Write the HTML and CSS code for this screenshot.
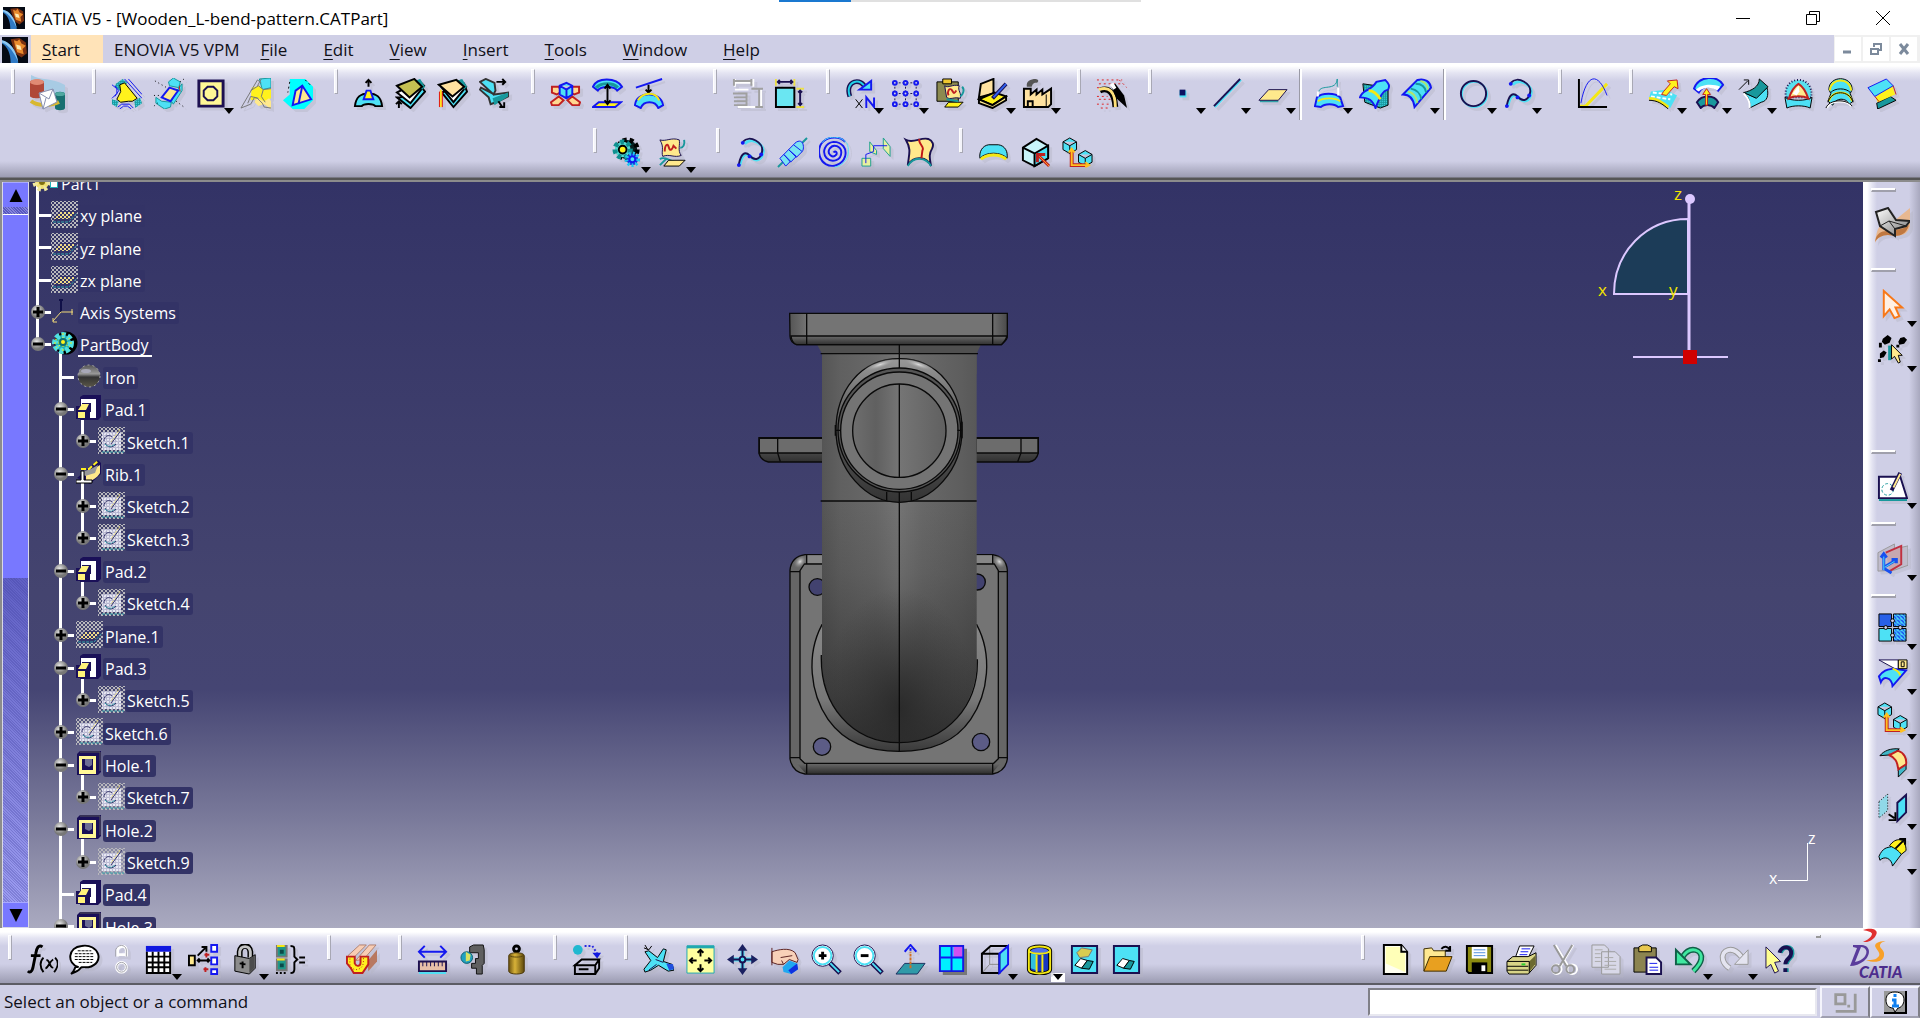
FILE: index.html
```html
<!DOCTYPE html>
<html lang="en">
<head>
<meta charset="utf-8">
<title>CATIA V5 - [Wooden_L-bend-pattern.CATPart]</title>
<link rel="stylesheet" href="styles.css">
</head>
<body>
<svg class="sprite" aria-hidden="true">
<defs>
<linearGradient id="g-shell" x1="0" x2="1" y1="0" y2="1"><stop offset="0" stop-color="#fff"/><stop offset="1" stop-color="#777"/></linearGradient>
<linearGradient id="g-brass"><stop offset="0" stop-color="#6d5410"/><stop offset=".4" stop-color="#d8b238"/><stop offset="1" stop-color="#5c470c"/></linearGradient>
<radialGradient id="g-knob" cx=".4" cy=".35"><stop offset="0" stop-color="#e8e8e8"/><stop offset="1" stop-color="#777"/></radialGradient>
<linearGradient id="g-iron" x2="0" y2="1"><stop offset="0" stop-color="#555"/><stop offset=".4" stop-color="#999"/><stop offset=".55" stop-color="#333"/><stop offset="1" stop-color="#5a5648"/></linearGradient>
<pattern id="p-dots" width="4" height="4" patternUnits="userSpaceOnUse"><path fill="#b8b8bc" d="M1 0h2v1H1zM0 1h1v2H0zM3 1h1v2H3zM1 3h2v1H1z"/></pattern>
<pattern id="p-gold" width="4" height="4" patternUnits="userSpaceOnUse"><path fill="#f0dc88" d="M1 0h2v1H1zM0 1h1v2H0zM3 1h1v2H3zM1 3h2v1H1z"/></pattern>
<pattern id="p-white" width="3" height="3" patternUnits="userSpaceOnUse"><path fill="#f4f4ff" d="M0 0h2v2H0z"/><path fill="#c4c4dc" d="M2 0h1v3H0V2h2z"/></pattern>
<pattern id="p-teal" width="2" height="2" patternUnits="userSpaceOnUse"><path class="ft" d="M0 0h2v2H0z"/><path class="fc" d="M0 0h1v1H0z"/></pattern>
<pattern id="p-bluehatch" width="4" height="4" patternUnits="userSpaceOnUse"><path class="fc" d="M0 0h4v4H0z"/><path fill="#1030f0" d="M0 0h2l2 2v2zM0 3l1 1H0z"/></pattern>

<symbol id="i-app" viewBox="0 0 24 24"><path fill="#050a14" d="M0 0h24v24H0z"/><path fill="#7a3010" d="M8 2l8-1 6 4 1 10-5 4-6-4z"/><path fill="#e98a2c" d="M11 3l3 1 2-2 2 4 4 2-3 3 1 5-6-2-2-6z"/><path fill="#ffe9b0" d="M13 7l4 1 1 4-4-1z"/><path fill="#2f79c4" d="M0 3c8 2 14 11 15 21H8C8 15 5 9 0 6z"/><path fill="#8cc8f2" d="M0 3c7 1 13 9 15 20-4-9-8-15-15-18z"/></symbol>
<symbol id="i-mail" viewBox="0 0 36 36"><path fill="#a8cbe4" d="M2 0c10 6 20 2 34 10v14L14 14 2 6z"/><path fill="#b04838" d="M1 7c0-3 14-3 14 0v14c0 3-14 3-14 0z"/><ellipse fill="#e08a74" cx="8" cy="7" rx="7" ry="3"/><path fill="#187070" d="M26 19c0-3 10-3 10 0v14c0 3-10 3-10 0z"/><ellipse fill="#50a8a0" cx="31" cy="19" rx="5" ry="2"/><path stroke="#d8b830" stroke-width="4" d="M2 26c6 5 20 5 28 1"/><path fill="#fff" stroke="#8890b0" stroke-width="1" d="M10 18l14-4 4 13-14 7z"/><path stroke="#8890b0" stroke-width="1" d="M10 18l10 6 4-10M14 34l3-11"/></symbol>
<symbol id="i-extract" viewBox="0 0 32 32"><path fill="url(#p-teal)" d="M5 6l7-5 5 4-8 8-5-4zM24 24l6-4 2 6-7 5zM1 22l7 2-2 6-5-3z"/><path class="sb" stroke-width="1" d="M1 7l5 4v5l-5 5M4 8l4 5-4 6M14 1l18 20M18 1l14 16M7 30l4-3h8l4 4M9 32l4-3h4l4 3"/><path class="fyy sk" stroke-width="1" d="M9 7l5-2 13 16-5 3h-4l-8 1-4-3 4-8z"/></symbol>
<symbol id="i-lightface" viewBox="0 0 32 32"><path class="fc st" stroke-width="1" d="M16 4l5-4 7 4-1 6-10-2zM3 20l6 4 10 1-1 5-6 2-9-6zM24 14l6-8v7l-9 14-2-3z"/><path class="fy sb" d="M17 10l9 3-8 11-9-4z"/><path class="sr" stroke-width="1" d="M27 8l1 6"/><path class="sk" stroke-width="1" stroke-dasharray="1 3" d="M2 3l14 8M1 18h8M24 24l8 6M28 4l4-3M1 29l6-5"/></symbol>
<symbol id="i-body" viewBox="0 0 32 32"><path fill="#fff796" stroke="#1d1050" stroke-width="3" d="M4 3h25v26H4z"/><path class="sn" d="M13 9h6l4 4v6l-4 4h-6l-4-4v-6z"/></symbol>
<symbol id="i-split" viewBox="0 0 32 32"><path class="fc st" stroke-width="1" d="M20 1l12-1v10l-9 2z"/><path class="fyy" d="M12 10l8-2 4 4 8-1v10l-7 4-8-3-6 1z"/><path class="fy" d="M17 20l8 4 5-3 2 3v8l-7-5-6 2-4-4z"/><path stroke="#777" stroke-width="1" d="M1 31L18 2l4 3M1 31l10-4 4-7 3 1 5 5 2 4 7 1M11 13l8-5 5 4-2 7 4 6M24 12l8-1M18 8l4-7M8 26l3-7 8 2"/></symbol>
<symbol id="i-tri" viewBox="0 0 32 32"><path fill="#0ff" d="M8 1h16l8 8v14l-9 9H11l-10-9 7-6z"/><path class="fy sb" d="M21 8l9 14-19 6 3-15z"/><path class="sb" d="M21 8l-4 19"/><path class="sk" stroke-width="1" stroke-dasharray="2 3" d="M8 4L6 15M24 2l7 7"/></symbol>
<symbol id="i-extrude" viewBox="0 0 32 32"><path class="sk" d="M16 9V2M13 5l3-3 3 3"/><path class="fc sk" d="M2 29c1-9 5-13 14-13s13 4 14 13h-7c-2-3-12-3-14 0z"/><path class="fyy sb" d="M14 13h4l3 9H11z"/></symbol>
<symbol id="i-thick" viewBox="0 0 32 32"><path class="fc sk" d="M2 20l14 11 15-17-4-5L6 20z"/><path class="fw sk" d="M2 15l14 11L30 8 25 3z"/><path class="ft" d="M20 3l6-2 5 8-3 3z"/><path fill="#c5c052" stroke="#000" d="M2 8L20 1l8 8-13 11z"/><path class="sk" d="M4 31v-7M1 27l3-3 3 3"/></symbol>
<symbol id="i-close" viewBox="0 0 32 32"><path class="fc sk" d="M5 15l12 15 14-16-3-8z"/><path class="fw sk" d="M5 10l12 15L30 9 24 3z"/><path class="ft" d="M20 3l6-2 5 8-3 3z"/><path fill="#ffe2a0" stroke="#000" d="M2 7L20 2l8 7-12 10z"/><path stroke="#e01010" stroke-width="4" d="M4 30V14"/><path stroke="#ffe020" stroke-width="2" d="M4 30V12"/></symbol>
<symbol id="i-sew" viewBox="0 0 32 32"><path class="fc" stroke="#333" d="M1 4l6-3 9 4 1 8-2 4zM2 10l14 7 14-2v4l-10 5-8 3-2-7L1 12z"/><path class="ft" d="M14 21l16-6v4l-14 9z"/><path class="sk" d="M18 4h9M24 1l3 3-3 3M20 24l4 6M26 25v5h-5"/></symbol>
<symbol id="i-crosscube" viewBox="0 0 32 32"><path stroke="#c02020" fill="#ffd890" d="M2 9h7l3 5-5 3-5-2zM30 9h-7l-3 5 5 3 5-2zM1 25l8-6 5 4-5 5H2zM31 25l-8-6-5 4 5 5h7z"/><path class="fc sb" d="M10 8l7-3 6 3v9l-6 4-7-4zM10 8l7 4 6-4M17 12v9"/></symbol>
<symbol id="i-project" viewBox="0 0 32 32"><path class="fc sb" d="M1 9c4-10 24-10 30 0l-5 4c-3-5-17-5-20 0z"/><path class="ft" d="M3 9c6-6 20-6 25 0l-3 2c-4-5-16-5-19 0z"/><path class="fyy sb" d="M7 25h23l-6 5H1z"/><path class="sk" d="M16 8v17M13 11l3-4 3 4M13 23l3 4 3-4"/></symbol>
<symbol id="i-tangent" viewBox="0 0 32 32"><path class="sb" d="M2 10L29 1"/><path class="sk" d="M15 7v7M12 12l3 3 3-3"/><path class="fc sb" d="M1 28c1-15 27-15 29 0l-5 3c-3-8-15-8-18 0z"/><path class="syy" d="M4 23c6-9 18-9 22 0"/></symbol>
<symbol id="i-gridoff" viewBox="0 0 32 32"><path stroke="#fff" d="M3 5h18M3 1v8M22 1v8M30 12v18H6M3 12h14"/><path stroke="#a0a0a0" d="M2 3h18M2 1v7M20 1v7M20 11h12M28 12v18M24 30h8M1 16h14v13M2 20h12M2 24h12M2 28h12"/></symbol>
<symbol id="i-constraint" viewBox="0 0 32 32"><path fill="#6ae6f2" stroke="#000" d="M2 10h19v20H2z"/><path stroke="#ece04a" d="M2 8V1M21 8V1M23 11h8M23 30h8"/><path class="sn" d="M4 4h15M27 13v15M6 2L4 4l2 2M17 2l2 2-2 2M25 15l2-2 2 2M25 26l2 2 2-2"/></symbol>
<symbol id="i-repeat" viewBox="0 0 32 32"><path stroke="#1a1050" stroke-width="5" d="M5 19C-1 2 18-1 21 11"/><path stroke="#20d0e8" stroke-width="2" d="M5 19C-1 2 18-1 21 11"/><path class="fc sb" d="M15 12h12V3z"/><path class="sk" stroke-width="1" d="M11 22l7 9M18 22l-7 9"/><path class="sb" d="M22 31V20l8 10V20"/></symbol>
<symbol id="i-pattern" viewBox="0 0 32 32"><path class="sn" stroke-width="1" stroke-dasharray="2 2" d="M5 5h22M5 16h22M5 27h22M5 5v22M16 5v22M27 5v22"/><g class="sb" fill="#cfcfe6"><circle cx="5" cy="5" r="2"/><circle cx="16" cy="5" r="2"/><circle cx="27" cy="5" r="2"/><circle cx="5" cy="16" r="2"/><circle cx="16" cy="16" r="2"/><circle cx="27" cy="16" r="2"/><circle cx="5" cy="27" r="2"/><circle cx="16" cy="27" r="2"/><circle cx="27" cy="27" r="2"/></g></symbol>
<symbol id="i-pastecopy" viewBox="0 0 32 32"><path fill="#8c8a50" stroke="#000" stroke-width="1" d="M2 4h22v20H2z"/><path fill="#f0c830" stroke="#000" stroke-width="1" d="M8 1h9v5H8z"/><path class="fy sn" stroke-width="1" d="M10 8c4 3 8-2 15 0-2 5 3 8 1 13-6-2-10 2-14-1z"/><path class="sr" d="M14 18c-2-4 1-8 3-6s2 6 5 1"/><path class="fyy sk" stroke-width="1" d="M14 25h15l-5 5H10z"/><path class="st" d="M28 9c3 3 1 8-2 10M12 22l12 2"/></symbol>
<symbol id="i-catalog" viewBox="0 0 32 32"><path fill="#ffe2a0" stroke="#000" d="M4 6l13-5v15L2 20z"/><path class="fyy sk" d="M2 22l16-7 12 4-14 9z"/><path class="fy sk" d="M2 22v4l14 5 14-8v-4l-14 9z"/><path stroke="#1a1050" stroke-width="4" d="M30 6L16 21"/><path stroke="#3060f0" stroke-width="2" d="M30 6L17 20"/></symbol>
<symbol id="i-factory" viewBox="0 0 32 32"><path fill="#ffe2a0" stroke="#000" d="M2 30V11h7v6l6-5v5l6-5v5l9-6v16l-3 3zM6 30v-6h5v6"/><path class="sk" stroke-width="1" d="M25 17v13"/><path fill="#555" d="M5 9c-1-6 4-8 9-8 3 0 4 3 1 4-4 0-4 2-5 4z"/></symbol>
<symbol id="i-analysis" viewBox="0 0 32 32"><path stroke="#e02020" stroke-width="1" stroke-dasharray="2 3" d="M1 2h26M3 6h22M1 19h11M3 22h12M1 27h12M5 31h8M24 2l8 8M1 10h4"/><path stroke="#000" stroke-width="6" d="M4 13c9-4 15 2 16 17"/><path stroke="#ffe27a" stroke-width="3" d="M3 12c10-4 17 2 17 18"/><path fill="#000" d="M15 7l5-1 9 12 3 13-11-10z"/><path fill="#fff" d="M14 7l4-2 3 5-3 2z"/></symbol>
<symbol id="i-point" viewBox="0 0 32 32"><path class="fc" d="M13 13h7v7h-7z"/><path fill="#0c1060" d="M13 12h6v6h-6z"/></symbol>
<symbol id="i-line" viewBox="0 0 32 32"><path class="sc" stroke-width="2" d="M3 30L30 2"/><path class="sn" d="M2 29L29 1"/></symbol>
<symbol id="i-plane" viewBox="0 0 32 32"><path stroke="#30a0a8" stroke-width="2" d="M3 24h19"/><path class="fy sn" stroke-width="1" d="M12 12h19l-9 11H2z"/></symbol>
<symbol id="i-projcurve" viewBox="0 0 32 32"><path class="st" stroke-width="1" d="M5 14c2-8 18 0 19-13v8"/><path class="fc sb" d="M3 20c5-5 19-5 24 0l3 9-5 1c-4-4-14-4-18 0l-6-1z"/><path class="syy" stroke-width="2" d="M4 24c5-4 18-4 23 0"/><path stroke="#fff" d="M4 14v5M25 10v8"/></symbol>
<symbol id="i-intersect" viewBox="0 0 32 32"><path fill="url(#p-teal)" stroke="#000" stroke-width="1" d="M4 6l14 2 12 4v16l-8 3-16-6z"/><path class="fc sb" d="M1 20c3-9 10-5 17-16l9-2c4 4 5 6 3 10-6 1-9 9-13 19-3-8-7-11-16-11z"/><path class="syy" stroke-width="3" d="M10 13c5 0 9 4 12 9"/></symbol>
<symbol id="i-offsetcurve" viewBox="0 0 32 32"><path class="fc sb" d="M2 17L17 2c8-2 13 2 14 8L14 30C13 22 9 17 2 17z"/><path class="syy" stroke-width="2" d="M20 3c5 1 7 4 8 9M7 14c6 1 9 6 10 12" opacity=".6"/><path class="st" d="M10 11c6 1 10 5 11 11M15 6c6 0 10 3 11 9"/></symbol>
<symbol id="i-circle" viewBox="0 0 32 32"><circle class="sc" stroke-width="2" cx="17" cy="17" r="13"/><circle class="sn" stroke-width="2" cx="16" cy="16" r="13"/></symbol>
<symbol id="i-spline" viewBox="0 0 32 32"><path class="sc" stroke-width="3" d="M10 7c7-8 21 1 19 9-2 10-9 9-13 4-5-5-9-1-11 9"/><path class="sn" stroke-width="2" d="M8 5C15-3 30 6 28 15c-2 10-9 9-13 4-5-5-9-1-11 9"/><g fill="#1418f0"><circle cx="8" cy="6" r="2"/><circle cx="15" cy="20" r="2"/><circle cx="4" cy="29" r="2"/><circle cx="27" cy="18" r="2"/></g></symbol>
<symbol id="i-law" viewBox="0 0 32 32"><path class="syy" stroke-width="3" d="M3 29h6L31 6"/><path class="sb" stroke-width="1" d="M4 26C10-6 22-6 31 18"/><path class="sk" stroke-width="2" d="M2 1v29h29"/></symbol>
<symbol id="i-extract2" viewBox="0 0 32 32"><path class="fc" d="M3 14l15-2 12 6-7 13-10-6-12-4z"/><path stroke="#fff" stroke-dasharray="4 2" d="M5 15l20 2M3 19l20 3"/><path class="syy" stroke-width="3" d="M1 21c8 0 13 4 20 9"/><path class="sk" stroke-width="1" d="M1 23c9 0 14 4 20 9"/><path class="fyy sr" stroke-width="1" d="M14 17l2-3 7-8-3-3 10-1 1 9-4-2-8 9z"/></symbol>
<symbol id="i-offset" viewBox="0 0 32 32"><path class="ft sn" d="M4 25c5-8 18-8 22 0l-4 6c-3-4-11-4-14 0z"/><path class="fc sb" d="M1 11C6-3 26-3 31 7l-5 6c-4-6-16-6-20 2z"/><path fill="#fff" d="M3 12c6-6 18-6 25-3l-3 4c-6-4-14-4-19 1z"/><path class="fyy sr" stroke-width="1" d="M10 17l4-6 4 6h-3v11h-2V17z"/></symbol>
<symbol id="i-sweep" viewBox="0 0 32 32"><path class="fc sk" stroke-width="1" d="M6 15l12 5 12-10c2 8 0 14-6 15l-12 6c1-7-1-11-6-16z"/><path class="ft sk" stroke-width="1" d="M22 1l9 8-12 12L6 15C14 13 22 9 22 1z"/><path stroke="#fff" stroke-width="2" d="M6 16c5 5 7 9 6 15"/><path class="sk" stroke-width="1" d="M1 12L10 3M6 2h5v5"/></symbol>
<symbol id="i-fill" viewBox="0 0 32 32"><path fill="#5ae0ee" stroke="#1a1050" stroke-dasharray="1 2" d="M3 20C-1-4 33-4 29 20z"/><path class="fc sk" stroke-width="1" d="M2 20l2 11c6-3 18-3 24 0l2-11c-6 4-22 4-28 0z"/><path class="fy sr" d="M16 6c5 3 8 9 10 15-5-3-15-3-20 0 2-6 5-12 10-15z"/><path fill="#fff" d="M10 16l6-8 1 6-3 4z"/></symbol>
<symbol id="i-loft" viewBox="0 0 32 32"><path class="fc sk" stroke-width="1" d="M4 12C4-3 28-3 28 12l-2 4 3 8-4 3c-3-7-14-7-17 1l-5-4 3-8z"/><path class="syy" stroke-width="2" d="M5 13C6-1 26-1 27 13M4 24c4-12 20-12 24 0"/><path class="sk" stroke-width="1" d="M6 15c4-5 16-5 20 0M3 25c4-13 22-13 26 0"/><path stroke="#fff" d="M2 31c3-8 20-9 25-2"/><path class="sk" stroke-width="1" d="M1 31c3-9 21-10 27-2"/></symbol>
<symbol id="i-blend" viewBox="0 0 32 32"><path class="ft sk" stroke-width="1" d="M10 26l14-7 6 4-19 9z"/><path class="fyy" d="M9 20l6-6 11-6 3 9-18 8z"/><path class="fc sb" stroke-width="1" d="M1 10L20 1l7 7L8 19z"/><path class="sr" stroke-width="1" d="M8 19l5 6M27 8l3 9"/></symbol>

<symbol id="i-gears" viewBox="0 0 32 32"><circle cx="16" cy="13" r="10" fill="#062020" stroke="#000" stroke-width="5" stroke-dasharray="4 3"/><circle cx="11" cy="13" r="8" fill="#50d8d0" stroke="#109090" stroke-width="5" stroke-dasharray="4 3"/><circle cx="11" cy="13" r="4" class="fyy sk"/><circle cx="21" cy="23" r="6" fill="#1830e0" stroke="#20c8f0" stroke-width="4" stroke-dasharray="2 2"/><circle cx="21" cy="23" r="3" class="fc sb"/></symbol>
<symbol id="i-userfeat" viewBox="0 0 32 32"><path class="fy sn" stroke-width="1" d="M3 3c6 2 12-3 20 0 1 5-2 11 2 16-7 3-12-2-19 1-2-5 2-9-3-17z"/><path class="sr" d="M8 15c0-7 3-9 4-5s3 5 5-1l3 3"/><path class="st" stroke-width="2" d="M28 3c1 5-1 8-4 8M3 23c4-4 10 2 15 2M3 29l7-7"/><path class="fy sk" stroke-width="1" d="M12 24h17l-6 6H7z"/></symbol>
<symbol id="i-helix" viewBox="0 0 32 32"><path class="st" d="M1 31L31 1"/><path class="sb" stroke-width="1" fill="#7ae4f2" d="M3 22l4-4 7 7-5 5zM7 18l5-5 8 7-6 6zM12 13l5-5 9 7-6 6zM17 8c4-5 9-5 10 0s-1 7-1 7"/></symbol>
<symbol id="i-spiral" viewBox="0 0 32 32"><path class="sb" stroke-width="2" d="M15 16c2-3 5 1 2 3-4 3-9-2-6-7 4-6 12-2 12 4 0 8-9 11-15 6C2 15 7 6 15 5c9 0 14 7 12 15-3 9-13 12-20 8-8-5-9-17-3-23C10-1 22-1 27 5"/><path class="sc" stroke-width="1" d="M3 6C10-3 24-1 29 7c4 10-1 22-13 24"/></symbol>
<symbol id="i-curvenet" viewBox="0 0 32 32"><path fill="#e8f0a0" stroke="#20a090" stroke-width="1" d="M1 22h9v8H1zM9 15V5l7 9v4zM23 12V1l7 9v10z"/><path class="sb" stroke-width="1" d="M5 27v-9l8-3V9h14"/></symbol>
<symbol id="i-isoparam" viewBox="0 0 32 32"><path class="fy sn" stroke-width="2" d="M3 3c8 4 15-3 23-1 5 2 6 6 4 10-3 5-3 8-1 18-4-9-17-12-24-1 1-11 4-16-2-26z"/><path class="st" d="M5 30c6-11 19-9 24 0"/><path stroke="#c01818" stroke-width="2" d="M17 2c-2 5 6 8 3 12l-1 8"/></symbol>
<symbol id="i-boundary" viewBox="0 0 32 32"><path class="fc sk" stroke-width="1" d="M2 22c-1-6 2-13 9-14h10c7 1 10 7 9 14-6-7-22-7-28 0z"/><path class="syy" stroke-width="3" d="M3 23c6-6 20-6 26 0"/></symbol>
<symbol id="i-cubearrow" viewBox="0 0 32 32"><path fill="#c8f4fa" stroke="#000" d="M3 11L17 2l12 7v13L15 30 3 24z"/><path class="fc sk" d="M15 17l14-8v13L15 30zM3 11l12 6"/><path stroke="#c02020" stroke-width="3" d="M19 19l11 11M18 26v-8h8"/><path stroke="#ffa020" stroke-width="1" d="M20 20l10 10"/></symbol>
<symbol id="i-axiscubes" viewBox="0 0 32 32"><path class="fc sk" stroke-width="1" d="M1 5l7-4 7 4v8l-7 4-7-4zM1 5l7 4 7-4M8 9v8M17 18l7-4 7 4v8l-7 4-7-4zM17 18l7 4 7-4M24 22v8"/><path stroke="#c02020" stroke-width="4" d="M10 15v14h16"/><path stroke="#ffc020" stroke-width="2" d="M10 13v16h17M7 16l3-4 3 4M24 26l4 3-4 2"/></symbol>

<symbol id="i-fx" viewBox="0 0 32 32"><path class="sk" stroke-width="3" d="M16 3C12 0 10 4 9 10L6 25c-1 4-3 5-5 3M4 12h10"/><path class="sk" d="M17 14c-4 4-4 10 0 15M29 14c4 4 3 10-1 15M20 17c3-2 4 9 7 7M27 16c-4 2-5 9-8 9"/></symbol>
<symbol id="i-bubble" viewBox="0 0 32 32"><path class="fw sk" stroke-width="2" d="M10 24C-3 20-1 3 13 2c18-3 25 18 7 22-5 0-8-1-9 2-1 2-6 3-9 5 3-2 3-4 5-8z"/><path class="sk" stroke-width="1" stroke-dasharray="3 1" d="M9 7h14M6 10h20M6 13h20M6 16h20M10 19h14"/></symbol>
<symbol id="i-chain" viewBox="0 0 32 32"><g stroke="#fff" stroke-width="3"><path d="M12 13V6c2-5 8-5 9 0v7M12 11h9"/><circle cx="16" cy="24" r="5"/></g><g stroke="#a0a0a8" stroke-width="1"><path d="M10 13V6c2-6 10-6 11 0v7"/><circle cx="16" cy="24" r="5"/></g></symbol>
<symbol id="i-table" viewBox="0 0 32 32"><path class="fw" d="M4 3h25v27H4z"/><path fill="#1018e0" d="M3 2h26v6H3z"/><path class="sk" stroke-width="2" d="M4 8v22h24V8M4 13h24M4 19h24M4 24h24M10 8v22M16 8v22M22 8v22"/></symbol>
<symbol id="i-tree" viewBox="0 0 32 32"><path class="fy sk" d="M1 12h6v10H1z"/><path class="fw sb" stroke-width="2" d="M24 1h6v7h-6zM24 14h6v7h-6zM24 26h6v5h-6z"/><path class="sk" d="M10 17h12M12 15l-2 2 2 2M20 15l2 2-2 2M10 12l9-9M14 3h5v5"/><path class="sr" stroke-width="2" d="M17 11h5M19 9v5M16 26h5M18 24v5"/></symbol>
<symbol id="i-lock" viewBox="0 0 32 32"><path stroke="#000" stroke-width="6" d="M10 14V8c1-8 10-8 11 0v6"/><path stroke="#c4c4c4" stroke-width="3" d="M10 14V8c1-7 10-7 11 0v6"/><path fill="#8c8c8c" stroke="#000" stroke-width="1" d="M5 12l15 3 6-4v14l-6 6-15-3z"/><path fill="#4c4c4c" d="M20 15l5-3v13l-5 5z"/><path class="sk" stroke-width="2" d="M13 18v7M10 20l6 1"/></symbol>
<symbol id="i-equiv" viewBox="0 0 32 32"><path fill="#209888" stroke="#777" d="M2 2h10v11H2zM2 16h10v11H2z"/><path class="syy" stroke-width="2" d="M2 2h8M2 16h8"/><path fill="#0a4a48" d="M5 6h4v4H5zM5 20h4v4H5z"/><path class="sk" d="M1 30h2M5 30h2M9 30h2M16 2c4 0 4 1 4 6v5l3 3-3 3v7c0 3-1 4-4 4M25 14h6M25 19h6"/></symbol>
<symbol id="i-material" viewBox="0 0 32 32"><path fill="#b87860" d="M22 18L32 6v12l-9 10z"/><path fill="#f8cdb4" stroke="#b08070" stroke-width="1" d="M2 12L14 1h7L9 13v5zM10 17L24 1h7L18 16z"/><path fill="#fff020" stroke="#c02020" d="M1 13h8v7c2 4 6 3 6-1v-6h8v8l-6 9H8l-3-5-4-5z"/><path stroke="#c02020" stroke-width="1" stroke-dasharray="1 2" d="M4 15v6c2 8 13 7 14-2v-5"/></symbol>
<symbol id="i-measure" viewBox="0 0 32 32"><path class="sb" d="M3 8h26M8 2L2 8l6 6M24 2l6 6-6 6"/><path fill="#e8c0a8" stroke="#1d1050" d="M2 18h28v10H2z"/><path class="sn" stroke-width="1" d="M6 18v5M10 18v5M14 18v5M18 18v5M22 18v5M26 18v5"/><path class="sc" d="M2 30h28"/></symbol>
<symbol id="i-caliper" viewBox="0 0 32 32"><path fill="#606060" stroke="#111" stroke-width="1" d="M11 3l4-2h10l1 5v14l-2 2v9h-6v-6h-5v-5h4v-5h3V9h-9z"/><circle cx="8" cy="14" r="6" fill="#20a0c0" stroke="#106070" stroke-width="1"/><path fill="#d8e060" d="M7 8l5 3-1 6-4 1z"/></symbol>
<symbol id="i-inertia" viewBox="0 0 32 32"><circle class="sk" stroke-width="3" cx="16" cy="5" r="3"/><path fill="url(#g-brass)" stroke="#4a380a" stroke-width="1" d="M8 12c0-4 16-4 16 0v16c0 4-16 4-16 0z"/><path stroke="#5a4610" stroke-width="1" d="M9 12c2 2 12 2 14 0"/></symbol>
<symbol id="i-knowledge" viewBox="0 0 32 32"><circle cx="6" cy="6" r="5" fill="#20b8d0"/><path stroke="#2828e0" stroke-width="2" stroke-dasharray="2 2" d="M13 2h8l5 8"/><path fill="#1018e0" d="M21 9h9l-4 6z"/><path class="sk" stroke-width="2" d="M3 22l7-6h18l-4 6zM3 22h21v9H3zM28 16v9l-4 6M7 26h10"/></symbol>
<symbol id="i-fly" viewBox="0 0 32 32"><path class="fc sk" stroke-width="1" d="M2 8l4-1 9 7 6-9 3 1-3 12 9 3 2 6-6 1-10-6-8 5-6 2-1-3 7-9z"/><path class="sk" stroke-width="1" d="M2 1l3 5M9 2L6 6M1 4l5 2"/><path fill="#2050e0" d="M24 20l7 1 1 5-5 1z"/><path stroke="#1a1050" stroke-width="1" d="M13 16l8 3M6 27l8-6"/></symbol>
<symbol id="i-fit" viewBox="0 0 32 32"><path fill="#ffffa0" stroke="#20a8b0" stroke-width="1" d="M2 2h28v28H2z"/><path stroke="#20a8b0" stroke-width="3" d="M2 3h28"/><path class="sk" d="M16 7v6M16 21v6M6 17h6M20 17h6M13 9l3-3 3 3M13 25l3 3 3-3M8 14l-3 3 3 3M24 14l3 3-3 3"/></symbol>
<symbol id="i-pan" viewBox="0 0 32 32"><path class="sc" stroke-width="4" d="M16 4v24M4 16h24"/><path class="sn" stroke-width="2" d="M16 3v26M3 16h26"/><path fill="#1a2060" d="M16 0l5 7H11zM16 32l5-7H11zM0 16l7-5v10zM32 16l-7-5v10z"/><circle cx="16" cy="16" r="3" class="fc sn"/></symbol>
<symbol id="i-rotate" viewBox="0 0 32 32"><path fill="#f8d0b8" stroke="#5a2020" stroke-width="1" d="M3 8c6-2 18-5 24 1l3 7-1 3-8-3-6 5H9l-6-2z"/><path stroke="#5a2020" stroke-width="1" d="M3 4v18M12 14l12-2M15 21l-2-4"/><path fill="#20a8f0" d="M14 24l7-7 8 3 1 6-7 5-8-2z"/><path fill="#1030e0" d="M20 27l9-7 1 6-7 5z"/></symbol>
<symbol id="i-zoomin" viewBox="0 0 32 32"><path class="sn" stroke-width="5" d="M18 18l12 12"/><path class="sc" stroke-width="2" d="M18 18l11 11"/><circle class="fw sn" stroke-width="1" cx="12" cy="12" r="11"/><circle class="sc" cx="12" cy="12" r="9"/><path class="sk" stroke-width="3" d="M12 8v8M8 12h8"/></symbol>
<symbol id="i-zoomout" viewBox="0 0 32 32"><path class="sn" stroke-width="5" d="M18 18l12 12"/><path class="sc" stroke-width="2" d="M18 18l11 11"/><circle class="fw sn" stroke-width="1" cx="12" cy="12" r="11"/><circle class="sc" cx="12" cy="12" r="9"/><path class="sk" stroke-width="3" d="M8 12h8"/></symbol>
<symbol id="i-normal" viewBox="0 0 32 32"><path fill="#309aa8" stroke="#1a3060" stroke-width="1" d="M10 20h21l-8 11H1z"/><path stroke="#d07020" stroke-dasharray="3 1" d="M16 25V8"/><path class="sb" d="M10 8l6-7 6 7M16 4v3"/></symbol>
<symbol id="i-multiview" viewBox="0 0 32 32"><path fill="#777" d="M6 5h25v27H6z"/><path fill="#00f0ff" stroke="#1818e0" d="M3 2h24v26H3z"/><path fill="#d050f0" d="M17 3h9v11h-9z"/><path class="sb" d="M15 2v26M3 14h24"/></symbol>
<symbol id="i-isoview" viewBox="0 0 32 32"><path class="fc" d="M21 10l9-8v19l-9 9z"/><path stroke="#888" stroke-width="1" d="M3 30l8-9h10M11 2v19"/><path class="sk" d="M3 10h18v20H3zM3 10l9-8h18"/><path class="sb" d="M21 10l9-8v19l-9 9z"/></symbol>
<symbol id="i-shading" viewBox="0 0 32 32"><path fill="#1838c0" stroke="#000" stroke-width="4" d="M5 7c0-6 22-6 22 0v19c0 6-22 6-22 0z"/><path fill="#30c0e0" d="M7 10h6v17l-6-2z"/><path fill="#5070e8" d="M7 7c2-4 16-4 18 0-2 3-16 3-18 0z"/><path class="syy" d="M5 7c0-6 22-6 22 0v19c0 6-22 6-22 0zM5 7c3 4 19 4 22 0M13 11v18M19 11v18"/></symbol>
<symbol id="i-hideshow" viewBox="0 0 32 32"><path class="fc sn" d="M3 2h26v28H3z"/><path fill="#d8cc50" stroke="#777" stroke-width="1" d="M8 9l5-5 11 2-4 7-9 1z"/><path class="fw sk" stroke-width="1" d="M6 22l6-7 7 2-6 8z"/><path class="ft sk" stroke-width="1" d="M19 17l6 1-4 8-8-1z"/></symbol>
<symbol id="i-swap" viewBox="0 0 32 32"><path class="fc sn" d="M3 2h26v28H3z"/><path class="fw sk" stroke-width="1" d="M6 22l6-7 7 2-6 8z"/><path class="ft sk" stroke-width="1" d="M19 17l5 1-4 8-7-1z"/></symbol>
<symbol id="i-new" viewBox="0 0 32 32"><path fill="#fffff0" stroke="#000" d="M4 1h18l6 7v23H4z"/><path fill="#ffff80" opacity=".5" d="M6 3h14l6 7v19L6 20z"/><path class="fw sk" d="M22 1v7h6"/></symbol>
<symbol id="i-open" viewBox="0 0 32 32"><path fill="#ffe890" stroke="#3a2a00" stroke-width="1" d="M2 28V5l8-1 2 3h12v7"/><path fill="#e8a020" stroke="#3a2a00" stroke-width="1" d="M8 13h23l-6 15H2z"/><path class="sk" d="M20 5c3-3 6-3 9 1M29 2v5h-5"/></symbol>
<symbol id="i-save" viewBox="0 0 32 32"><path fill="#8c8a10" stroke="#000" d="M3 2h26v28H5l-2-2z"/><path class="fw" d="M8 3h16v12H8z"/><path stroke="#5090e0" stroke-width="1" d="M10 6h12M10 9h12M10 12h12"/><path fill="#000" d="M8 19h16v11H8z"/><path class="fw" d="M18 22h4v6h-4z"/></symbol>
<symbol id="i-print" viewBox="0 0 32 32"><path class="fw sk" stroke-width="1" d="M10 13l4-11h15l-6 12z"/><path class="sb" stroke-width="1" d="M16 5h9M15 8h8M14 11h8"/><path fill="#d8d488" stroke="#000" stroke-width="1" d="M1 18l6-5h16l8-4v13l-8 9H3l-2-3z"/><path fill="#6c6a30" d="M24 18l6-6v9l-6 8z"/><path class="sk" stroke-width="1" d="M1 18h23v12M1 23h22M1 27h22"/><path stroke="#30d030" d="M16 21h4"/></symbol>
<symbol id="i-cut" viewBox="0 0 32 32"><g stroke="#fff"><path d="M8 1l13 22M26 1L13 23"/><circle cx="9" cy="26" r="5"/><circle cx="25" cy="26" r="5"/></g><g stroke="#999"><path d="M6 1l13 22M25 1L12 23"/><circle cx="8" cy="26" r="4"/><circle cx="23" cy="26" r="4"/></g></symbol>
<symbol id="i-copy" viewBox="0 0 32 32"><path fill="#d8d8e8" stroke="#999" stroke-width="1" d="M2 1h13l4 4v19H2zM12 8h14l5 5v18H12z"/><path stroke="#aaa" stroke-width="1" d="M5 6h8M5 10h6M5 14h6M5 18h6M15 14h9M15 18h12M15 22h12M15 26h12"/></symbol>
<symbol id="i-paste" viewBox="0 0 32 32"><path fill="#8c8450" stroke="#000" stroke-width="1" d="M2 4h23v25H2z"/><path fill="#e8c850" stroke="#000" stroke-width="1" d="M7 3l4-2h5l4 2v5H7z"/><path class="fw sn" d="M15 14h10l5 5v12H15z"/><path class="sb" stroke-width="1" d="M18 20h8M18 24h9M18 27h9"/></symbol>
<symbol id="i-undo" viewBox="0 0 32 32"><path stroke="#106048" stroke-width="6" d="M9 13c8-12 21-7 19 3-1 5-4 8-8 12"/><path stroke="#40e8a0" stroke-width="3" d="M9 13c8-12 21-7 19 3-1 5-4 8-8 12"/><path fill="#40e8a0" stroke="#106048" d="M2 6v15h15z"/></symbol>
<symbol id="i-redo" viewBox="0 0 32 32"><path stroke="#999" stroke-width="6" d="M23 13C14 1 2 6 4 16c1 5 4 7 7 9"/><path stroke="#e4e4f0" stroke-width="4" d="M23 13C14 1 2 6 4 16c1 5 4 7 7 9"/><path fill="#e4e4f0" stroke="#999" stroke-width="1" d="M30 6v15H16z"/></symbol>
<symbol id="i-whatsthis" viewBox="0 0 32 32"><path class="st" stroke-width="5" d="M17 9c2-8 13-7 12 1 0 5-6 5-6 11M23 25v4"/><path class="sn" stroke-width="4" d="M16 9c2-8 13-7 12 1 0 5-6 5-6 11M22 25v4"/><path fill="#ffff90" stroke="#1d1050" stroke-width="1" d="M2 3v22l5-4 4 9 4-2-4-9 6-1z"/></symbol>

<symbol id="i-shape" viewBox="0 0 36 36"><path fill="#e8b890" d="M36 1v18c-4 14-16 8-22 9-6 0-11 3-13 8 2-14 3-20 14-18z"/><path fill="#c07840" d="M1 35c3-18 18-6 34-17-4 14-16 11-21 10-6 0-11 3-13 7z"/><path fill="url(#g-shell)" stroke="#222" d="M2 5l12-4 8 12 14 1-4 5-11 3v7L6 19z"/><path stroke="#222" stroke-width="1" d="M6 19l9-5 17 5M15 14l6 8"/></symbol>
<symbol id="i-select" viewBox="0 0 32 32"><path fill="#fff0e4" stroke="#f87818" stroke-width="2" d="M7 2v26l6-7 5 9 5-2-4-9h7z"/></symbol>
<symbol id="i-selecttrap" viewBox="0 0 32 32"><path fill="#000" d="M6 5l5-4 4 3-2 5-5 2-3-3zM24 4l4-1 3 3-3 4-5 1-1-3zM3 20l4-3 3 2-3 5-4 1zM1 26h3v3H1zM2 9h3v5H2zM20 11h3v3h-3z"/><path class="st" stroke-width="3" d="M13 12v15"/><path class="fy sk" stroke-width="1" d="M15 11v15l3-3 4 7 2-1-2-7h4z"/></symbol>
<symbol id="i-sketch" viewBox="0 0 32 32"><path class="fw sn" d="M2 6h22l7 22H2z"/><path class="st" d="M2 30h29"/><circle class="st" stroke-width="1" stroke-dasharray="3 2" cx="11" cy="19" r="6"/><path class="sn" stroke-width="4" d="M24 2l-9 18"/><path class="sy" stroke-width="2" d="M24 3l-7 14"/></symbol>
<symbol id="i-axisplanes" viewBox="0 0 32 32"><path fill="#c0bccc" stroke="#999" stroke-width="1" d="M1 10L18 1v5l14-3v20l-14 5-17 1z"/><path fill="#c8a8b0" stroke="#c03040" d="M9 10l16-7v19l-12 7"/><path stroke="#1850f0" stroke-width="3" d="M7 12v16M4 15l3-4 3 4M7 25l12-7M15 17h5v4M7 26l8 5"/><path class="sc" stroke-width="1" d="M7 14v14M8 25l10-6"/></symbol>
<symbol id="i-tiles" viewBox="0 0 32 32"><path fill="#2860e8" stroke="#000" stroke-width="1" d="M2 2h13v13H2z"/><path fill="url(#p-bluehatch)" stroke="#000" stroke-width="1" d="M17 2h13v13H17zM17 17h13v13H17z"/><path class="fc sk" stroke-width="1" d="M2 17h13v13H2z"/><g fill="#cfcfe6" stroke="#000" stroke-width="1"><circle cx="9" cy="16" r="2"/><circle cx="24" cy="16" r="2"/><circle cx="16" cy="9" r="2"/><circle cx="16" cy="24" r="2"/></g></symbol>
<symbol id="i-powercopy" viewBox="0 0 32 32"><path class="fw sn" stroke-width="1" d="M2 3h20v11z"/><path class="fc sb" d="M2 20c5-7 9-7 15-8l13 2-14 16c-1-9-9-11-12-4z"/><path class="syy" stroke-width="2" d="M16 12c4 1 7 4 8 7"/><path class="fy sk" stroke-width="1" d="M22 3h9v9h-9z"/><path class="sk" stroke-width="1" d="M25 5h3v5h-3z"/></symbol>
<symbol id="i-fillet" viewBox="0 0 32 32"><path fill="#40b8c8" stroke="#000" stroke-width="1" d="M3 9c4-5 11-8 20-7l-8 6zM22 24l8-8v7l-8 8z"/><path class="fy sr" d="M12 8c4 0 7-4 10-4 6 2 9 8 8 14l-8 5c-1-8-3-12-10-15z"/></symbol>
<symbol id="i-translate" viewBox="0 0 32 32"><path fill="#90d8e8" stroke="#000" stroke-width="1" stroke-dasharray="1 2" d="M2 10l9-8v17l-9 8z"/><path class="fc sn" d="M21 11l9-8v18l-9 9z"/><path class="sk" stroke-width="2" d="M12 23l6 4M19 21v8h-7"/></symbol>
<symbol id="i-extrap" viewBox="0 0 32 32"><path class="fyy sk" stroke-width="1" d="M13 9c6-9 17-9 17 5l-5 4z"/><path class="fc sk" stroke-width="1" d="M2 20c4-9 8-9 13-10 6 3 9 6 10 8l-9 12c-1-8-8-11-13-6z"/><path class="sk" stroke-width="2" d="M19 12L28 3M23 2h6v6"/></symbol>

<symbol id="t-plane" viewBox="0 0 27 27"><path fill="url(#p-dots)" d="M0 0h27v27H0z"/><path fill="#34346a" d="M9 10h18l-7 12H1z"/><path fill="url(#p-gold)" d="M9 11h16l-6 7H3z"/><path stroke="#30a0a8" stroke-width="1" stroke-dasharray="3 1" d="M2 21h16l8-9"/></symbol>
<symbol id="t-axis" viewBox="0 0 27 27"><path stroke="#101048" stroke-width="2" d="M10 2v13M8 2h4"/><path stroke="#f0d878" stroke-width="1" d="M10 14h12M21 11v6M10 14l-8 9M2 20v4h4"/></symbol>
<symbol id="t-body" viewBox="0 0 27 27"><circle cx="15" cy="13" r="9" fill="#000" stroke="#000" stroke-width="5"/><circle cx="12" cy="13" r="8" fill="#20b0b0" stroke="#50e0e0" stroke-width="6" stroke-dasharray="4 2"/><path class="syy" stroke-width="1" stroke-dasharray="2 2" d="M12 3v19M4 9l15 8M19 8L5 18M3 13h18"/><circle cx="12" cy="12" r="3" stroke="#107070" class="fyy"/></symbol>
<symbol id="t-part" viewBox="0 0 27 27"><circle cx="13" cy="13" r="7" fill="#f0e070" stroke="#f0e8a0" stroke-width="5" stroke-dasharray="3 3"/><circle cx="13" cy="13" r="3" fill="#807010"/></symbol>
<symbol id="t-iron" viewBox="0 0 27 27"><circle cx="13" cy="13" r="11" fill="url(#g-iron)" stroke="#aaa" stroke-width="1" stroke-dasharray="2 3"/><ellipse cx="10" cy="8" rx="5" ry="2" fill="#a8a8b8"/></symbol>
<symbol id="t-pad" viewBox="0 0 27 27"><path fill="#1a1058" d="M4 2l3-2h18v22l-3 3H4z"/><path class="fw" d="M5 4h15v19H5z"/><path fill="#1a1058" d="M0 11h14v13H0zM6 8h9v9H6z"/><path fill="#fff27a" d="M2 17h7v6H2zM2 15l4-6h7l-3 6z"/></symbol>
<symbol id="t-rib" viewBox="0 0 27 27"><path fill="#1a1058" d="M1 18L22 0l3 3v11L14 24z"/><path fill="#ffe88a" d="M10 14l14-9v8c-3 5-8 8-14 9z"/><path fill="#999" d="M5 12l10-3 7-4-3 8-10 3z"/><path stroke="#ffef20" stroke-width="2" stroke-dasharray="5 2" d="M5 9h8l9-8"/><path class="fw sk" stroke-width="1" d="M5 11h3v9h8v3H0v-3h5z"/></symbol>
<symbol id="t-hole" viewBox="0 0 27 27"><path fill="#1a1058" d="M1 3l3-3h21v21l-3 3H1z"/><path stroke="#555" stroke-width="1" d="M4 1h20v19"/><path fill="#fff796" d="M3 5h17v18H3z"/><path fill="#1a1058" d="M6 8h11v11H6z"/><path fill="#6c6c94" d="M9 8h7v6l-3 2-4-2z"/></symbol>
<symbol id="t-sketch" viewBox="0 0 27 27"><path fill="url(#p-dots)" d="M0 0h27v27H0z"/><path fill="url(#p-white)" d="M4 5h19v18H4z" opacity=".85"/><path stroke="#34346a" stroke-width="1" d="M24 2L13 17M6 14c0-5 5-7 8-4M7 16c2 5 8 5 11 1"/><path stroke="#30a0a8" stroke-width="1" stroke-dasharray="3 1" d="M4 25h22M7 17c2 3 7 3 10 0"/><path stroke="#f0e070" stroke-width="1" stroke-dasharray="2 1" d="M22 2l-9 13"/></symbol>
<symbol id="t-plus" viewBox="0 0 14 14"><circle cx="7" cy="7" r="7" fill="url(#g-knob)"/><path stroke="#000" stroke-width="3" d="M7 2v10M2 7h10"/></symbol>
<symbol id="t-minus" viewBox="0 0 14 14"><circle cx="7" cy="7" r="7" fill="url(#g-knob)"/><path stroke="#000" stroke-width="3" d="M2 7h10"/></symbol>
</defs>
</svg>

<div class="app">
<header class="titlebar">
  <svg class="title-icon"><use href="#i-app"/></svg>
  <h1 class="title">CATIA V5 - [Wooden_L-bend-pattern.CATPart]</h1>
  <div class="progress"><span class="progress-done"></span></div>
  <div class="window-controls">
    <button class="wc" aria-label="Minimize"><svg class="wc-ico" viewBox="0 0 16 16"><path d="M1 8.500h14"/></svg></button>
    <button class="wc" aria-label="Restore"><svg class="wc-ico" viewBox="0 0 16 16"><path d="M1.500 4.500h10v10h-10zM4.500 4V1.500h10v10H12"/></svg></button>
    <button class="wc" aria-label="Close"><svg class="wc-ico" viewBox="0 0 16 16"><path d="M1 1l14 14M15 1L1 15"/></svg></button>
  </div>
</header>

<nav class="menubar">
  <svg class="menu-icon"><use href="#i-app"/></svg>
  <button class="menu menu-start"><u>S</u>tart</button>
  <button class="menu menu-vpm">ENOVIA V5 VPM</button>
  <button class="menu"><u>F</u>ile</button>
  <button class="menu"><u>E</u>dit</button>
  <button class="menu"><u>V</u>iew</button>
  <button class="menu"><u>I</u>nsert</button>
  <button class="menu"><u>T</u>ools</button>
  <button class="menu"><u>W</u>indow</button>
  <button class="menu"><u>H</u>elp</button>
  <div class="mdi">
    <button class="mdi-btn" aria-label="Minimize document"><svg class="mdi-ico" viewBox="0 0 12 12"><path stroke-width="3" d="M1 9h8"/></svg></button>
    <button class="mdi-btn" aria-label="Restore document"><svg class="mdi-ico" viewBox="0 0 12 12"><path d="M1 6h7v5H1zM4 4V1h7v6H9"/></svg></button>
    <button class="mdi-btn" aria-label="Close document"><svg class="mdi-ico" viewBox="0 0 12 12"><path stroke-width="3" d="M2 1l8 10M10 1L2 11"/></svg></button>
  </div>
</nav>

<section class="toolbars" aria-label="Toolbars">
  <div class="bar">
    <div class="group"><i class="grip"></i><button class="tool tool-wide" aria-label="Send"><svg class="ico ico-lg"><use href="#i-mail"/></svg></button></div>
    <div class="group far"><i class="grip"></i>
      <button class="tool" aria-label="Surface extraction"><svg class="ico"><use href="#i-extract"/></svg></button>
      <button class="tool" aria-label="Face"><svg class="ico"><use href="#i-lightface"/></svg></button>
      <button class="tool dd" aria-label="Body"><svg class="ico"><use href="#i-body"/></svg></button>
      <button class="tool" aria-label="Split"><svg class="ico"><use href="#i-split"/></svg></button>
      <button class="tool" aria-label="Trim"><svg class="ico"><use href="#i-tri"/></svg></button>
    </div>
    <div class="group"><i class="grip"></i>
      <button class="tool" aria-label="Extrude"><svg class="ico"><use href="#i-extrude"/></svg></button>
      <button class="tool" aria-label="Thick surface"><svg class="ico"><use href="#i-thick"/></svg></button>
      <button class="tool" aria-label="Close surface"><svg class="ico"><use href="#i-close"/></svg></button>
      <button class="tool" aria-label="Sew surface"><svg class="ico"><use href="#i-sew"/></svg></button>
    </div>
    <div class="group"><i class="grip"></i>
      <button class="tool" aria-label="Work support"><svg class="ico"><use href="#i-crosscube"/></svg></button>
      <button class="tool" aria-label="Projection"><svg class="ico"><use href="#i-project"/></svg></button>
      <button class="tool" aria-label="Tangency"><svg class="ico"><use href="#i-tangent"/></svg></button>
    </div>
    <div class="group farther"><i class="grip"></i>
      <button class="tool" aria-label="Constraints dialog" disabled><svg class="ico"><use href="#i-gridoff"/></svg></button>
      <button class="tool" aria-label="Constraint"><svg class="ico"><use href="#i-constraint"/></svg></button>
    </div>
    <div class="group"><i class="grip"></i>
      <button class="tool dd" aria-label="Repeat object"><svg class="ico"><use href="#i-repeat"/></svg></button>
      <button class="tool dd" aria-label="Pattern"><svg class="ico"><use href="#i-pattern"/></svg></button>
      <button class="tool" aria-label="PowerCopy"><svg class="ico"><use href="#i-pastecopy"/></svg></button>
      <button class="tool dd" aria-label="Catalog"><svg class="ico"><use href="#i-catalog"/></svg></button>
      <button class="tool dd" aria-label="Factory"><svg class="ico"><use href="#i-factory"/></svg></button>
    </div>
    <div class="group"><i class="grip"></i><button class="tool" aria-label="Analysis"><svg class="ico"><use href="#i-analysis"/></svg></button></div>
    <div class="group"><i class="grip"></i>
      <button class="tool dd" aria-label="Point"><svg class="ico"><use href="#i-point"/></svg></button>
      <button class="tool dd" aria-label="Line"><svg class="ico"><use href="#i-line"/></svg></button>
      <button class="tool dd" aria-label="Plane"><svg class="ico"><use href="#i-plane"/></svg></button>
      <i class="rule"></i>
      <button class="tool dd" aria-label="Project curve"><svg class="ico"><use href="#i-projcurve"/></svg></button>
      <button class="tool" aria-label="Intersection"><svg class="ico"><use href="#i-intersect"/></svg></button>
      <button class="tool dd" aria-label="Parallel curve"><svg class="ico"><use href="#i-offsetcurve"/></svg></button>
      <i class="rule"></i>
      <button class="tool dd" aria-label="Circle"><svg class="ico"><use href="#i-circle"/></svg></button>
      <button class="tool dd" aria-label="Spline"><svg class="ico"><use href="#i-spline"/></svg></button>
    </div>
    <div class="group"><i class="grip"></i><button class="tool" aria-label="Law"><svg class="ico"><use href="#i-law"/></svg></button></div>
    <div class="group"><i class="grip"></i>
      <button class="tool dd" aria-label="Extrude surface"><svg class="ico"><use href="#i-extract2"/></svg></button>
      <button class="tool dd" aria-label="Offset"><svg class="ico"><use href="#i-offset"/></svg></button>
      <button class="tool dd" aria-label="Sweep"><svg class="ico"><use href="#i-sweep"/></svg></button>
      <button class="tool" aria-label="Fill"><svg class="ico"><use href="#i-fill"/></svg></button>
      <button class="tool" aria-label="Multi-sections surface"><svg class="ico"><use href="#i-loft"/></svg></button>
      <button class="tool" aria-label="Blend"><svg class="ico"><use href="#i-blend"/></svg></button>
    </div>
  </div>
  <div class="bar bar-second">
    <div class="group"><i class="grip"></i>
      <button class="tool dd" aria-label="Part design"><svg class="ico"><use href="#i-gears"/></svg></button>
      <button class="tool dd" aria-label="User feature"><svg class="ico"><use href="#i-userfeat"/></svg></button>
    </div>
    <div class="group"><i class="grip"></i>
      <button class="tool" aria-label="Spline curve"><svg class="ico"><use href="#i-spline"/></svg></button>
      <button class="tool" aria-label="Helix"><svg class="ico"><use href="#i-helix"/></svg></button>
      <button class="tool" aria-label="Spiral"><svg class="ico"><use href="#i-spiral"/></svg></button>
      <button class="tool" aria-label="Spine"><svg class="ico"><use href="#i-curvenet"/></svg></button>
      <button class="tool" aria-label="Isoparametric curve"><svg class="ico"><use href="#i-isoparam"/></svg></button>
    </div>
    <div class="group"><i class="grip"></i>
      <button class="tool" aria-label="Boundary"><svg class="ico"><use href="#i-boundary"/></svg></button>
      <button class="tool" aria-label="Extract"><svg class="ico"><use href="#i-cubearrow"/></svg></button>
      <button class="tool" aria-label="Axis to axis"><svg class="ico"><use href="#i-axiscubes"/></svg></button>
    </div>
  </div>
</section>

<main class="work">
  <div class="scroll" aria-hidden="true">
    <span class="scroll-btn"><svg class="scroll-arrow" viewBox="0 0 14 14"><path d="M7 0l7 14H0z"/></svg></span>
    <span class="scroll-gap"></span>
    <span class="scroll-thumb"></span>
    <span class="scroll-track"></span>
    <span class="scroll-btn"><svg class="scroll-arrow" viewBox="0 0 14 14"><path d="M7 14l7-14H0z"/></svg></span>
  </div>

  <section class="viewport" aria-label="3D view">
    <ul class="tree">
      <li class="node l1 root"><svg class="pic"><use href="#t-part"/></svg><i class="flag"></i><span class="label">Part1</span></li>
      <li class="node l1"><i class="tick"></i><svg class="pic"><use href="#t-plane"/></svg><span class="label">xy plane</span></li>
      <li class="node l1"><i class="tick"></i><svg class="pic"><use href="#t-plane"/></svg><span class="label">yz plane</span></li>
      <li class="node l1"><i class="tick"></i><svg class="pic"><use href="#t-plane"/></svg><span class="label">zx plane</span></li>
      <li class="node l1"><i class="tick"></i><svg class="knob"><use href="#t-plus"/></svg><svg class="pic"><use href="#t-axis"/></svg><span class="label">Axis Systems</span></li>
      <li class="node l1 last open"><i class="tick"></i><svg class="knob"><use href="#t-minus"/></svg><svg class="pic"><use href="#t-body"/></svg><span class="label current">PartBody</span></li>
      <li class="node l2"><i class="tick"></i><svg class="pic"><use href="#t-iron"/></svg><span class="label">Iron</span></li>
      <li class="node l2 open"><i class="tick"></i><svg class="knob"><use href="#t-minus"/></svg><svg class="pic"><use href="#t-pad"/></svg><span class="label">Pad.1</span></li>
      <li class="node l3 last"><i class="tick"></i><svg class="knob"><use href="#t-plus"/></svg><svg class="pic"><use href="#t-sketch"/></svg><span class="label">Sketch.1</span></li>
      <li class="node l2 open"><i class="tick"></i><svg class="knob"><use href="#t-minus"/></svg><svg class="pic"><use href="#t-rib"/></svg><span class="label">Rib.1</span></li>
      <li class="node l3"><i class="tick"></i><svg class="knob"><use href="#t-plus"/></svg><svg class="pic"><use href="#t-sketch"/></svg><span class="label">Sketch.2</span></li>
      <li class="node l3 last"><i class="tick"></i><svg class="knob"><use href="#t-plus"/></svg><svg class="pic"><use href="#t-sketch"/></svg><span class="label">Sketch.3</span></li>
      <li class="node l2 open"><i class="tick"></i><svg class="knob"><use href="#t-minus"/></svg><svg class="pic"><use href="#t-pad"/></svg><span class="label">Pad.2</span></li>
      <li class="node l3 last"><i class="tick"></i><svg class="knob"><use href="#t-plus"/></svg><svg class="pic"><use href="#t-sketch"/></svg><span class="label">Sketch.4</span></li>
      <li class="node l2"><i class="tick"></i><svg class="knob"><use href="#t-plus"/></svg><svg class="pic"><use href="#t-plane"/></svg><span class="label">Plane.1</span></li>
      <li class="node l2 open"><i class="tick"></i><svg class="knob"><use href="#t-minus"/></svg><svg class="pic"><use href="#t-pad"/></svg><span class="label">Pad.3</span></li>
      <li class="node l3 last"><i class="tick"></i><svg class="knob"><use href="#t-plus"/></svg><svg class="pic"><use href="#t-sketch"/></svg><span class="label">Sketch.5</span></li>
      <li class="node l2"><i class="tick"></i><svg class="knob"><use href="#t-plus"/></svg><svg class="pic"><use href="#t-sketch"/></svg><span class="label">Sketch.6</span></li>
      <li class="node l2 open"><i class="tick"></i><svg class="knob"><use href="#t-minus"/></svg><svg class="pic"><use href="#t-hole"/></svg><span class="label">Hole.1</span></li>
      <li class="node l3 last"><i class="tick"></i><svg class="knob"><use href="#t-plus"/></svg><svg class="pic"><use href="#t-sketch"/></svg><span class="label">Sketch.7</span></li>
      <li class="node l2 open"><i class="tick"></i><svg class="knob"><use href="#t-minus"/></svg><svg class="pic"><use href="#t-hole"/></svg><span class="label">Hole.2</span></li>
      <li class="node l3 last"><i class="tick"></i><svg class="knob"><use href="#t-plus"/></svg><svg class="pic"><use href="#t-sketch"/></svg><span class="label">Sketch.9</span></li>
      <li class="node l2"><i class="tick"></i><svg class="pic"><use href="#t-pad"/></svg><span class="label">Pad.4</span></li>
      <li class="node l2 open"><i class="tick"></i><svg class="knob"><use href="#t-minus"/></svg><svg class="pic"><use href="#t-hole"/></svg><span class="label">Hole.3</span></li>
    </ul>

    <svg class="model" viewBox="0 0 960 1500" role="img" aria-label="L-bend pipe pattern">
      <defs>
        <linearGradient id="m-tube"><stop offset="0" stop-color="#555"/><stop offset=".12" stop-color="#606060"/><stop offset=".35" stop-color="#686868"/><stop offset=".5" stop-color="#747474"/><stop offset=".65" stop-color="#686868"/><stop offset=".9" stop-color="#5e5e5e"/><stop offset="1" stop-color="#585858"/></linearGradient>
        <linearGradient id="m-bend" x2="0" y2="1"><stop offset="0" stop-color="#2c2c2c" stop-opacity="0"/><stop offset=".3" stop-color="#2c2c2c" stop-opacity=".14"/><stop offset=".6" stop-color="#2c2c2c" stop-opacity=".42"/><stop offset=".8" stop-color="#2c2c2c" stop-opacity=".65"/><stop offset="1" stop-color="#2c2c2c" stop-opacity=".95"/></linearGradient>
        <radialGradient id="m-core" cx=".5" cy=".86" r=".5"><stop offset="0" stop-color="#282828" stop-opacity=".9"/><stop offset=".4" stop-color="#2c2c2c" stop-opacity=".5"/><stop offset="1" stop-color="#333" stop-opacity="0"/></radialGradient>
        <linearGradient id="m-hflange"><stop offset="0" stop-color="#555"/><stop offset=".08" stop-color="#747474"/><stop offset=".92" stop-color="#747474"/><stop offset="1" stop-color="#4a4a4a"/></linearGradient>
        <linearGradient id="m-edge" x2="0" y2="1"><stop offset="0" stop-color="#6a6a6a"/><stop offset="1" stop-color="#303030"/></linearGradient>
        <linearGradient id="m-bore"><stop offset="0" stop-color="#6e6e6e"/><stop offset=".25" stop-color="#606060"/><stop offset=".5" stop-color="#757575"/><stop offset="1" stop-color="#606060"/></linearGradient>
        <linearGradient id="m-fillet" x2="0" y2="1"><stop offset="0" stop-color="#888"/><stop offset=".6" stop-color="#777"/><stop offset="1" stop-color="#3a3a3a"/></linearGradient>
        <linearGradient id="m-collar" x2="0" y2="1"><stop offset="0" stop-color="#999"/><stop offset=".3" stop-color="#6c6c6c"/><stop offset="1" stop-color="#333"/></linearGradient>
        <radialGradient id="m-glint"><stop offset="0" stop-color="#ddd"/><stop offset="1" stop-color="#888" stop-opacity="0"/></radialGradient>
      </defs>
      <g stroke="#0a0a0a" stroke-width="4">
        <path fill="#666" d="M150 840q4-40 45-46h563q40 6 44 46v567q-6 38-44 45H195q-38-6-45-45z"/>
        <path fill="url(#m-edge)" stroke="none" d="M170 1420h612l-26 30H196z"/>
        <path fill="#868686" stroke="none" d="M200 796h558v24H200z"/>
        <path fill="#747474" d="M193 822h570l12 20v564l-14 14H194l-14-14V842z"/>
        <path d="M200 794v28M758 794v28M150 845h30M775 845h27M150 1403h30M775 1403h27M200 1420v32M758 1420v32"/>
        <g class="hole-fill"><circle cx="232" cy="891" r="25"/><circle cx="712" cy="876" r="24"/></g>
        <g class="hole-fill-low"><circle cx="246" cy="1370" r="26"/><circle cx="723" cy="1356" r="26"/></g>
        <ellipse cx="180" cy="815" rx="22" ry="16" fill="url(#m-glint)" stroke="none" transform="rotate(-45 180 815)"/>
        <ellipse cx="778" cy="815" rx="22" ry="16" fill="url(#m-glint)" stroke="none" transform="rotate(45 778 815)"/>
        <path fill="url(#m-fillet)" d="M246 1004c-48 90-36 205 18 284 50 70 120 96 214 96s166-26 214-96c54-79 66-194 18-284z"/>
        <path fill="url(#m-edge)" d="M57 443h200v73H85q-22-4-28-26zM700 443h195v46q-6 24-28 27H700z"/>
        <path fill="#6c6c6c" d="M58 445h190v44H58zM708 445h186v44H708z"/>
        <path d="M113 443v46l8 26M843 443v46l-10 26"/>
        <path fill="#505050" stroke="none" d="M232 165h490l-12 26v60H246v-60z"/>
        <path fill="url(#m-tube)" stroke="none" d="M246 190h464v930c-2 130-90 238-232 238S248 1250 246 1120z"/>
        <path fill="url(#m-bend)" stroke="none" d="M246 633h464v487c-2 130-90 238-232 238S248 1250 246 1120z"/>
        <path fill="url(#m-core)" stroke="none" d="M246 633h464v487c-2 130-90 238-232 238S248 1250 246 1120z"/>
        <path d="M244 1095c-4 150 90 263 234 263s238-113 234-250M242 191h472M242 633h468M478 165v1219"/>
        <path fill="url(#m-hflange)" d="M149 70h653v68q2 10-18 26H170q-20-8-20-26z"/>
        <path fill="url(#m-edge)" d="M153 138h647q0 10-16 26H170q-14-4-17-26z"/>
        <path d="M200 70v94M758 70v94"/>
        <path fill="url(#m-collar)" d="M478 206c120 0 188 100 188 214 0 120-88 217-188 217s-190-97-190-217c0-114 70-214 190-214z"/>
        <ellipse cx="420" cy="224" rx="50" ry="12" fill="url(#m-glint)" stroke="none" transform="rotate(-18 420 224)"/>
        <ellipse cx="536" cy="224" rx="50" ry="12" fill="url(#m-glint)" stroke="none" transform="rotate(18 536 224)"/>
        <path d="M440 606v26M514 606v26M478 206v30M478 600v40"/>
        <ellipse cx="478" cy="420" rx="184" ry="186" fill="#555"/>
        <circle cx="478" cy="422" r="176" fill="#747474"/>
        <circle cx="478" cy="422" r="140" fill="url(#m-bore)"/>
        <path d="M478 282v280M286 405v32M666 395v50M286 421h14M652 421h14"/>
      </g>
    </svg>

    <svg class="compass" viewBox="0 0 140 180" role="img" aria-label="Compass">
      <path fill="#1c3c58" stroke="#dcc8ff" stroke-width="2" d="M92 33C50 33 18 66 18 108h74z"/>
      <path stroke="#dcc8ff" stroke-width="3" d="M93 13v158"/><path stroke="#dcc8ff" stroke-width="2" d="M37 171h95"/>
      <circle cx="94" cy="13" r="5" fill="#dcc8ff"/>
      <path fill="#d00000" d="M87 164h14v14H87z"/>
      <g class="compass-text"><text x="78" y="14">z</text><text x="2" y="110">x</text><text x="73" y="110">y</text></g>
    </svg>

    <svg class="triad" viewBox="0 0 60 60" role="img" aria-label="Axis triad">
      <path stroke="#fff" d="M43.500 12v37.500H14"/>
      <g class="triad-text"><text x="44" y="13">z</text><text x="5" y="53">x</text></g>
    </svg>
  </section>

  <aside class="side" aria-label="Workbench toolbar">
    <div class="vgroup"><i class="hgrip"></i>
      <button class="tool" aria-label="Generative shape design"><svg class="ico ico-lg"><use href="#i-shape"/></svg></button></div>
    <div class="vgroup v-near"><i class="hgrip"></i>
      <button class="tool dd" aria-label="Select"><svg class="ico"><use href="#i-select"/></svg></button>
      <button class="tool dd" aria-label="Selection sets"><svg class="ico"><use href="#i-selecttrap"/></svg></button></div>
    <div class="vgroup v-far"><i class="hgrip"></i>
      <button class="tool dd" aria-label="Sketch"><svg class="ico"><use href="#i-sketch"/></svg></button></div>
    <div class="vgroup"><i class="hgrip"></i>
      <button class="tool dd" aria-label="Axis system"><svg class="ico"><use href="#i-axisplanes"/></svg></button></div>
    <div class="vgroup v-tight"><i class="hgrip"></i>
      <button class="tool dd" aria-label="Join"><svg class="ico"><use href="#i-tiles"/></svg></button>
      <button class="tool dd" aria-label="Cut"><svg class="ico"><use href="#i-powercopy"/></svg></button>
      <button class="tool dd" aria-label="Transform"><svg class="ico"><use href="#i-axiscubes"/></svg></button>
      <button class="tool dd" aria-label="Fillet"><svg class="ico"><use href="#i-fillet"/></svg></button>
      <button class="tool dd" aria-label="Translate"><svg class="ico"><use href="#i-translate"/></svg></button>
      <button class="tool dd" aria-label="Extrapolate"><svg class="ico"><use href="#i-extrap"/></svg></button></div>
  </aside>
</main>

<section class="bottombar" aria-label="Standard toolbars">
  <div class="group"><i class="grip"></i>
    <button class="tool" aria-label="Formula"><svg class="ico"><use href="#i-fx"/></svg></button>
    <button class="tool" aria-label="Comment"><svg class="ico"><use href="#i-bubble"/></svg></button>
    <button class="tool tool-narrow" aria-label="Link" disabled><svg class="ico"><use href="#i-chain"/></svg></button>
    <button class="tool dd" aria-label="Design table"><svg class="ico"><use href="#i-table"/></svg></button>
    <button class="tool" aria-label="Relations"><svg class="ico"><use href="#i-tree"/></svg></button>
    <button class="tool dd" aria-label="Lock"><svg class="ico"><use href="#i-lock"/></svg></button>
    <button class="tool" aria-label="Equivalent dimensions"><svg class="ico"><use href="#i-equiv"/></svg></button>
  </div>
  <div class="group"><i class="grip"></i><button class="tool" aria-label="Apply material"><svg class="ico"><use href="#i-material"/></svg></button></div>
  <div class="group"><i class="grip"></i>
    <button class="tool" aria-label="Measure between"><svg class="ico"><use href="#i-measure"/></svg></button>
    <button class="tool" aria-label="Measure item"><svg class="ico"><use href="#i-caliper"/></svg></button>
    <button class="tool" aria-label="Measure inertia"><svg class="ico"><use href="#i-inertia"/></svg></button>
  </div>
  <div class="group"><i class="grip"></i><button class="tool" aria-label="Catalog browser"><svg class="ico"><use href="#i-knowledge"/></svg></button></div>
  <div class="group"><i class="grip"></i>
    <button class="tool" aria-label="Fly mode"><svg class="ico"><use href="#i-fly"/></svg></button>
    <button class="tool" aria-label="Fit all in"><svg class="ico"><use href="#i-fit"/></svg></button>
    <button class="tool" aria-label="Pan"><svg class="ico"><use href="#i-pan"/></svg></button>
    <button class="tool" aria-label="Rotate"><svg class="ico"><use href="#i-rotate"/></svg></button>
    <button class="tool" aria-label="Zoom in"><svg class="ico"><use href="#i-zoomin"/></svg></button>
    <button class="tool" aria-label="Zoom out"><svg class="ico"><use href="#i-zoomout"/></svg></button>
    <button class="tool" aria-label="Normal view"><svg class="ico"><use href="#i-normal"/></svg></button>
    <button class="tool" aria-label="Multi-view"><svg class="ico"><use href="#i-multiview"/></svg></button>
    <button class="tool dd" aria-label="Isometric view"><svg class="ico"><use href="#i-isoview"/></svg></button>
    <button class="tool dd dd-boxed" aria-label="Shading"><svg class="ico"><use href="#i-shading"/></svg></button>
    <button class="tool" aria-label="Hide/Show"><svg class="ico"><use href="#i-hideshow"/></svg></button>
    <button class="tool" aria-label="Swap visible space"><svg class="ico"><use href="#i-swap"/></svg></button>
  </div>
  <div class="group end"><i class="grip"></i>
    <button class="tool" aria-label="New"><svg class="ico"><use href="#i-new"/></svg></button>
    <button class="tool" aria-label="Open"><svg class="ico"><use href="#i-open"/></svg></button>
    <button class="tool" aria-label="Save"><svg class="ico"><use href="#i-save"/></svg></button>
    <button class="tool" aria-label="Print"><svg class="ico"><use href="#i-print"/></svg></button>
    <button class="tool" aria-label="Cut" disabled><svg class="ico"><use href="#i-cut"/></svg></button>
    <button class="tool" aria-label="Copy" disabled><svg class="ico"><use href="#i-copy"/></svg></button>
    <button class="tool" aria-label="Paste"><svg class="ico"><use href="#i-paste"/></svg></button>
    <button class="tool dd" aria-label="Undo"><svg class="ico"><use href="#i-undo"/></svg></button>
    <button class="tool dd" aria-label="Redo"><svg class="ico"><use href="#i-redo"/></svg></button>
    <button class="tool" aria-label="What's this?"><svg class="ico"><use href="#i-whatsthis"/></svg></button>
  </div>
  <i class="grip-end"></i>
  <div class="brand">
    <svg class="brand-mark" viewBox="0 0 40 40" aria-hidden="true"><path fill="#e03030" d="M13 2c9-3 16 0 13 5-1 3-5 6-9 7h-4c4-2 8-4 9-8 0-2-4-3-9-4z"/><path fill="#5a3c9c" fill-rule="evenodd" d="M3 17h9c9 1 9 10 2 16-4 3-9 5-14 5l7-18-4-1zM11 19L5 34c8-1 13-8 11-12-1-2-3-3-5-3z"/><path fill="#f8a028" d="M36 13c-8 0-13 3-10 7 2 3 6 7 1 10-2 2-7 2-11 2 10 4 18 1 18-5 1-5-5-7-4-10 1-3 3-3 6-4z"/></svg>
    <span class="brand-name">CATIA</span>
  </div>
</section>

<footer class="status">
  <label class="status-text" for="command">Select an object or a command</label>
  <input class="command" id="command" type="text">
  <button class="status-btn" aria-label="Power input" disabled><svg class="status-ico" viewBox="0 0 28 24"><path stroke="#999" stroke-width="3" d="M4 4h10v10H4zM18 15v3M4 22h21V3"/></svg></button>
  <button class="status-btn" aria-label="Information"><svg class="status-ico" viewBox="0 0 24 24"><path fill="#999" d="M1 1h22v22H1z"/><path stroke="#000" stroke-width="2" d="M1 23h22V1"/><path fill="#fff" stroke="#000" stroke-width="1" d="M12 2c7 0 9 4 9 8s-3 8-6 8l-3 4-2-4c-5 0-7-4-7-8s2-8 9-8z"/><path stroke="#1080f0" stroke-width="3" d="M12 4v3M9 10h3v6M9 16h7"/></svg></button>
</footer>
</div>
</body>
</html>
```
FILE: styles.css
```css
:root {
  --panel: #cfcfe6;
  --shade: #9c9cb2;
  --navy: #1a1050;
  --scroll: #7878ff;
}

* { box-sizing: border-box; }

body {
  margin: 0;
  font-family: "Open Sans", "Noto Sans", sans-serif;
  font-size: 17px;
  color: #101018;
  background: var(--panel);
}

button {
  padding: 0;
  border: 0;
  background: none;
  font: inherit;
  color: inherit;
}

svg { display: block; fill: none; }

.sprite { position: absolute; width: 0; height: 0; }

/* icon palette */
.fc { fill: #4de1f5; }
.ft { fill: #18989c; }
.fy { fill: #ffe98c; }
.fyy { fill: #fff21c; }
.fw { fill: #fff; }
.sk { stroke: #000; }
.sb { stroke: #1418f0; }
.sn { stroke: #1a1050; }
.sr { stroke: #c02020; }
.st { stroke: #18989c; }
.sc { stroke: #4de1f5; }
.sy { stroke: #ffe98c; }
.syy { stroke: #f4e814; }

.app {
  display: flex;
  flex-direction: column;
  height: 100vh;
  overflow: hidden;
}

/* title bar */
.titlebar {
  position: relative;
  display: flex;
  align-items: center;
  height: 35px;
  padding-left: 3px;
  background: #fff;
}
.title-icon { width: 22px; height: 22px; }
.title {
  margin: 2px 0 0 6px;
  font-size: 17px;
  font-weight: 400;
  line-height: 24px;
  color: #000;
}
.progress {
  position: absolute;
  top: 0;
  left: 779px;
  width: 362px;
  height: 2px;
  background: #e0e0e0;
}
.progress-done { display: block; width: 72px; height: 2px; background: #1a78d0; }
.window-controls { display: flex; margin-left: auto; padding-right: 2px; }
.wc {
  display: flex;
  align-items: center;
  justify-content: center;
  width: 70px;
  height: 33px;
}
.wc-ico { width: 16px; height: 16px; stroke: #000; stroke-width: 1; }

/* menu bar */
.menubar {
  display: flex;
  height: 28px;
  background: var(--panel);
  line-height: 30px;
}
.menu-icon { width: 30px; height: 26px; margin: 2px 1px 0 0; }
.menu { padding: 0 18px; white-space: nowrap; }
.menu u { text-underline-offset: 3px; }
.menu-start { width: 72px; padding: 0 0 0 11px; background: #ffe3b8; text-align: left; }
.menu-vpm { padding: 0 3px 0 11px; }
.mdi { display: flex; gap: 2px; margin-left: auto; padding: 2px 3px 2px 1px; background: #f0f0f0; }
.mdi-btn {
  display: flex;
  align-items: center;
  justify-content: center;
  width: 26px;
  height: 24px;
  background: #fff;
}
.mdi-ico { width: 12px; height: 12px; stroke: #7c8a9c; stroke-width: 2; }

/* toolbars */
.toolbars {
  height: 119px;
  padding-top: 6px;
  border-bottom: 2px solid #8c8c8c;
  background: linear-gradient(#fff 0, #fff 3px, #e4e4f2 10px, var(--panel) 18px, var(--panel) 98px, var(--shade) 114px, #555 115px, #555 100%);
}
.bar { display: flex; height: 59px; padding-left: 11px; }
.bar-second { height: 48px; padding-left: 593px; }
.group { display: flex; flex: none; align-items: flex-start; }
.group + .group { margin-left: 16px; }
.bar .far { margin-left: 20px; }
.bar .farther { margin-left: 43px; }
.bar-second .group + .group { margin-left: 20px; }
.grip {
  flex: none;
  width: 4px;
  height: 25px;
  margin-right: 9px;
  border: solid #fff;
  border-width: 1px 1px 0 1px;
  border-right-color: #a8a8b4;
  border-bottom: 1px solid #a8a8b4;
  background: #f4f4fa;
}
.rule {
  width: 3px;
  height: 51px;
  margin: 0 6px 0 3px;
  border-left: 1px solid #9a9aa6;
  border-right: 2px solid #fff;
}
.tool {
  position: relative;
  display: flex;
  flex: none;
  align-items: center;
  justify-content: center;
  width: 42px;
  height: 48px;
}
.tool-wide { width: 48px; padding-right: 2px; }
.tool-narrow { width: 32px; }
.dd { width: 45px; padding-right: 3px; }
.dd::after {
  content: "";
  position: absolute;
  right: 0;
  bottom: 3px;
  border: solid transparent;
  border-width: 6px 5px 0 5px;
  border-top-color: #000;
}
.dd-boxed::before {
  content: "";
  position: absolute;
  right: -2px;
  bottom: 1px;
  width: 14px;
  height: 9px;
  background: #fff;
}
.ico {
  width: 31px;
  height: 31px;
  stroke-width: 2;
  filter: drop-shadow(3px 3px 0 rgba(180, 180, 196, .4));
}
.ico-lg { width: 36px; height: 36px; }

/* work area */
.work {
  display: flex;
  flex: 1;
  min-height: 0;
  background: #8c8c8c;
}
.scroll {
  display: flex;
  flex: none;
  flex-direction: column;
  width: 29px;
  padding: 0 1px 1px 3px;
  background: linear-gradient(90deg, #8c8c8c 2px, #d8d8e8 2px);
}
.scroll-btn {
  display: flex;
  flex: none;
  align-items: center;
  justify-content: center;
  height: 25px;
  border-top: 1px solid #a8a8ff;
  background: var(--scroll);
}
.scroll-arrow { width: 14px; height: 13px; fill: #000; }
.scroll-gap,
.scroll-track { background: repeating-linear-gradient(45deg, #5858c0 0 1px, #8484dc 1px 2px); }
.scroll-gap { flex: none; height: 7px; }
.scroll-thumb { flex: 364; background: var(--scroll); border-top: 1px solid #fff; }
.scroll-track {
  flex: 324;
  background: repeating-linear-gradient(45deg, rgba(64, 64, 160, .3) 0 1px, transparent 1px 2px), linear-gradient(#6060c4, #9c9cf0);
}

.viewport {
  position: relative;
  flex: 1;
  overflow: hidden;
  background: linear-gradient(#333366 0, #44446f 55%, #454573 68%, #7c7c9c 86%, #aaaac0 100%);
}

/* specification tree */
.tree {
  margin: -14px 0 0;
  padding: 0;
  list-style: none;
  color: #fff;
  font-size: 16px;
}
.node {
  display: flex;
  align-items: center;
  position: relative;
  height: 32px;
  --x1: 7px;
  --x2: 30px;
  --x3: 52px;
  --line: linear-gradient(#fff, #fff) no-repeat;
}
.node:nth-child(3n) { height: 33px; }
.l1 { padding-left: 22px; background: var(--line) var(--x1) 0 / 3px 100%; }
.l1.root { padding-left: 0; background: var(--line) var(--x1) 100% / 3px 50%; }
.l1.last { background: var(--line) var(--x1) 0 / 3px 50%, var(--line) var(--x2) 100% / 3px 40%; }
.l2 { padding-left: 47px; background: var(--line) var(--x2) 0 / 3px 100%; }
.l2.open { background: var(--line) var(--x2) 0 / 3px 100%, var(--line) var(--x3) 100% / 3px 50%; }
.l3 { padding-left: 69px; background: var(--line) var(--x2) 0 / 3px 100%, var(--line) var(--x3) 0 / 3px 100%; }
.l3.last { background: var(--line) var(--x2) 0 / 3px 100%, var(--line) var(--x3) 0 / 3px 50%; }

.tick { position: absolute; top: 14px; left: 7px; width: 15px; height: 3px; background: #fff; }
.l2 .tick { left: 30px; }
.l3 .tick { left: 52px; }
.knob { position: absolute; top: 8px; left: 2px; width: 14px; height: 14px; }
.l2 .knob { left: 25px; }
.l3 .knob { left: 47px; }
.pic { flex: none; width: 27px; height: 27px; margin-bottom: 4px; stroke-width: 2; }
.flag { width: 8px; height: 8px; margin-right: 1px; border: 1px solid #20b0b8; background: #fff; }
.root .pic { margin-right: -6px; }
.label {
  padding: 0 3px 0 2px;
  border-radius: 3px;
  background: #333366;
  line-height: 22px;
  white-space: nowrap;
}
.current { border-bottom: 2px solid #fff; border-radius: 0; line-height: 20px; }

/* model and axes on the drawing canvas */
.model {
  position: absolute;
  top: 108px;
  left: calc(50% - 206px);
  width: 320px;
  height: 500px;
}
.hole-fill { fill: #42426f; }
.hole-fill-low { fill: #5c5c86; }
.compass {
  position: absolute;
  top: 4px;
  right: 127px;
  width: 140px;
  height: 180px;
  overflow: visible;
}
.compass-text { fill: #f4e400; font-size: 17px; }
.triad {
  position: absolute;
  right: 39px;
  bottom: 37px;
  width: 60px;
  height: 60px;
  overflow: visible;
}
.triad-text { fill: #fff; font-size: 16px; }

/* right-hand toolbar */
.side {
  flex: none;
  width: 57px;
  padding: 6px 0 0 4px;
  background: linear-gradient(90deg, #fff 0, #fff 4px, #e4e4f2 9px, var(--panel) 14px, var(--panel) 46px, #a8a8be 57px);
}
.vgroup + .vgroup { margin-top: 13px; }
.side .v-near { margin-top: 21px; }
.side .v-far { margin-top: 78px; }
.side .v-tight .hgrip { margin-bottom: 7px; }
.hgrip {
  display: block;
  width: 25px;
  height: 4px;
  margin: 0 0 10px 4px;
  border: 1px solid #fff;
  border-right-color: #a0a0ac;
  border-bottom: 2px solid #a0a0ac;
  background: #fff;
}
.side .tool { width: 50px; height: 45px; padding: 0; }
.side .dd::after { bottom: 0; }

/* bottom toolbar */
.bottombar {
  position: relative;
  display: flex;
  flex: none;
  height: 57px;
  padding: 7px 12px 0 8px;
  border-bottom: 2px solid #5c5c64;
  background: linear-gradient(#fff 0, #fff 4px, #e4e4f2 10px, var(--panel) 18px, var(--panel) 36px, var(--shade) 55px);
}
.bottombar .end { margin-left: auto; }
.grip-end { width: 5px; height: 3px; margin-left: 16px; border: solid #999; border-width: 0 1px 2px 0; }
.brand {
  display: flex;
  flex-direction: column;
  align-items: flex-start;
  width: 58px;
  margin: -7px 0 0 29px;
}
.brand-mark { width: 40px; height: 40px; }
.brand-name {
  margin: -4px 0 0 9px;
  color: #4c2c8c;
  font-family: Lato, "Open Sans", sans-serif;
  font-size: 16px;
  font-style: italic;
  font-weight: 900;
  line-height: 16px;
}

/* status bar */
.status {
  display: flex;
  flex: none;
  align-items: stretch;
  height: 33px;
  padding-left: 4px;
  background: var(--panel);
}
.status-text { flex: 1; line-height: 34px; }
.command {
  width: 449px;
  margin: 3px 3px 2px 0;
  border: 2px solid #808088;
  border-right-color: #e8e8f0;
  border-bottom-color: #e8e8f0;
  background: #fff;
}
.status-btn {
  display: flex;
  align-items: center;
  justify-content: center;
  width: 50px;
  margin-top: 1px;
  border: 2px solid #f4f4fc;
  border-right-color: #808088;
  border-bottom-color: #a0a0b0;
}
.status-ico { width: 26px; height: 24px; stroke-width: 2; }
```
